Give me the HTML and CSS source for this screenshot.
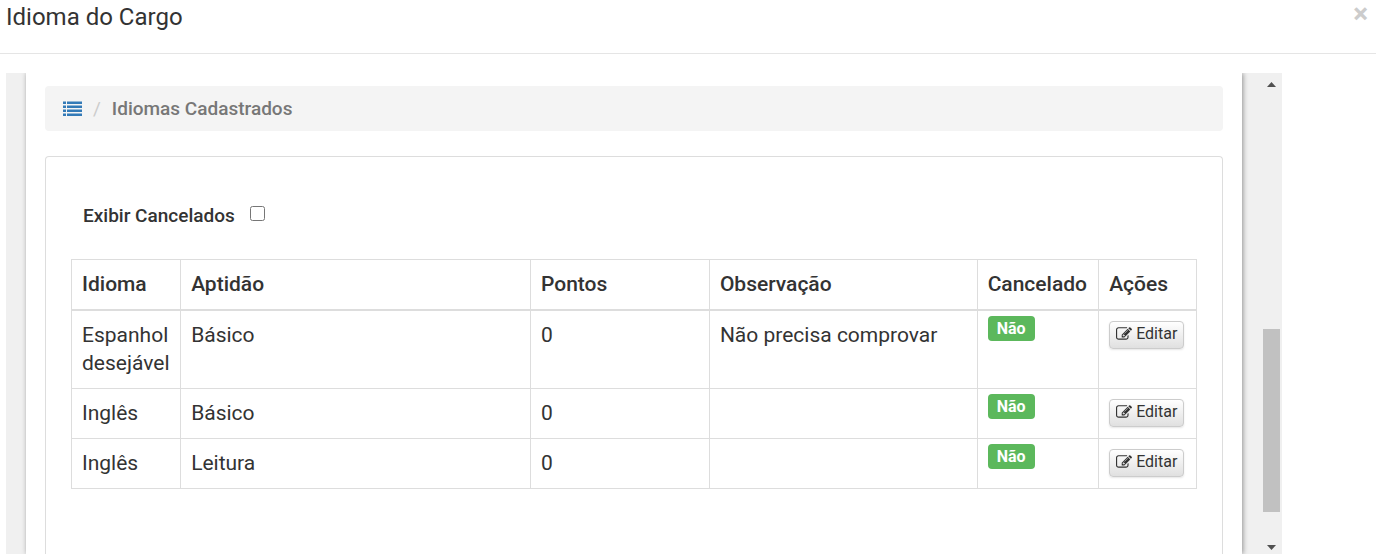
FILE: index.html
```html
<!DOCTYPE html>
<html lang="pt-BR">
<head>
<meta charset="utf-8">
<title>Idioma do Cargo</title>
<link rel="stylesheet" href="styles.css">
</head>
<body>
<svg class="sprite" aria-hidden="true">
  <symbol id="icon-edit" viewBox="0 0 1792 1792">
    <path d="M888 1184l116-116-152-152-116 116v56h96v96h56zm440-720q-16-16-33 1l-350 350q-17 17-1 33t33-1l350-350q17-17 1-33zm80 594v190q0 119-84.500 203.500t-203.500 84.500h-832q-119 0-203.500-84.500t-84.500-203.500v-832q0-119 84.500-203.500t203.500-84.500h832q63 0 117 25 15 7 18 23 3 17-9 29l-49 49q-14 14-32 8-23-6-45-6h-832q-66 0-113 47t-47 113v832q0 66 47 113t113 47h832q66 0 113-47t47-113v-126q0-13 9-22l64-64q15-15 35-7t20 29zm-96-738l288 288-672 672h-288v-288zm444 132l-92 92-288-288 92-92q28-28 68-28t68 28l152 152q28 28 28 68t-28 68z"/>
  </symbol>
</svg>
<header class="modal-header">
  <h1 class="modal-title">Idioma do Cargo</h1>
  <button class="close" type="button" aria-label="Fechar">×</button>
</header>
<div class="frame">
  <main class="sheet">
    <nav class="breadcrumb" aria-label="Navegação">
      <a class="list-link" href="#" aria-label="Lista"><svg width="19" height="15" viewBox="0 0 19 15" aria-hidden="true"><path d="M0 .5h3V3H0zM4 .5h15V3H4zM0 4.500h3V7H0zM4 4.500h15V7H4zM0 8.500h3V11H0zM4 8.500h15V11H4zM0 12.500h3V15H0zM4 12.500h15V15H4z"/></svg></a>
      <span class="divider">/</span>
      <span class="current">Idiomas Cadastrados</span>
    </nav>
    <section class="panel">
      <label class="filter">Exibir Cancelados <input class="check" type="checkbox"></label>
      <table class="grid">
        <colgroup><col class="c-lang"><col class="c-skill"><col class="c-points"><col class="c-note"><col class="c-status"><col class="c-actions"></colgroup>
        <thead>
          <tr><th>Idioma</th><th>Aptidão</th><th>Pontos</th><th>Observação</th><th>Cancelado</th><th>Ações</th></tr>
        </thead>
        <tbody>
          <tr><td>Espanhol desejável</td><td>Básico</td><td>0</td><td>Não precisa comprovar</td><td class="status"><span class="tag">Não</span></td><td class="actions"><button class="edit" type="button"><svg class="pencil" aria-hidden="true"><use href="#icon-edit"/></svg>Editar</button></td></tr>
          <tr><td>Inglês</td><td>Básico</td><td>0</td><td></td><td class="status"><span class="tag">Não</span></td><td class="actions"><button class="edit" type="button"><svg class="pencil" aria-hidden="true"><use href="#icon-edit"/></svg>Editar</button></td></tr>
          <tr><td>Inglês</td><td>Leitura</td><td>0</td><td></td><td class="status"><span class="tag">Não</span></td><td class="actions"><button class="edit" type="button"><svg class="pencil" aria-hidden="true"><use href="#icon-edit"/></svg>Editar</button></td></tr>
        </tbody>
      </table>
    </section>
  </main>
  <div class="scrollbar" aria-hidden="true">
    <svg width="9" height="5" viewBox="0 0 9 5"><path d="M0 5L4.500 0L9 5z"/></svg>
    <div class="track"><div class="thumb"></div></div>
    <svg width="9" height="5" viewBox="0 0 9 5"><path d="M0 0L4.500 5L9 0z"/></svg>
  </div>
</div>
</body>
</html>
```
FILE: styles.css
```css
* { box-sizing: border-box; }
body {
  margin: 0;
  height: 100vh;
  display: flex;
  flex-direction: column;
  overflow: hidden;
  background: #fff;
  color: #333;
  font-family: Roboto, "Liberation Sans", sans-serif;
  font-size: 21px;
  line-height: 28px;
}
.sprite { display: none; }
.modal-header {
  display: flex;
  justify-content: space-between;
  align-items: flex-start;
  padding: 0 8px 19px 6px;
  border-bottom: 1px solid #e5e5e5;
}
.modal-title {
  margin: 0;
  font-size: 24px;
  font-weight: 400;
  line-height: 34px;
}
.close {
  padding: 0;
  border: 0;
  background: none;
  color: #ccc;
  font: 700 28px/28px Roboto, "Liberation Sans", sans-serif;
}
.frame {
  flex: 1;
  min-height: 0;
  display: flex;
  margin: 19px 94px 0 6px;
  padding-left: 20px;
  overflow: hidden;
  background: #f0f0f0;
}
.sheet {
  flex: 1;
  min-width: 0;
  display: flex;
  flex-direction: column;
  gap: 25px;
  padding: 13px 19px 0;
  background: #fff;
  box-shadow: 1px 0 5px rgba(0, 0, 0, .4);
}
.breadcrumb {
  display: flex;
  align-items: center;
  padding: 9px 18px 8px;
  border-radius: 4px;
  background: #f4f4f4;
  font-size: 19px;
}
.list-link { display: flex; margin-bottom: 2px; fill: #337ab7; }
.divider { margin: 0 11px; color: #ccc; }
.current { color: #777; font-weight: 500; }
.panel {
  flex: 1;
  padding: 45px 25px 0;
  border: 1px solid #ddd;
  border-bottom: 0;
  border-radius: 4px 4px 0 0;
}
.filter {
  display: flex;
  align-items: center;
  gap: 15px;
  margin: 0 0 29px 12px;
  font-size: 19px;
  font-weight: 500;
}
.check { width: 15px; height: 15px; margin: 0 0 5px; }
.grid {
  width: 100%;
  table-layout: fixed;
  border-collapse: collapse;
}
.c-lang { width: 9.7%; }
.c-skill { width: 31.1%; }
.c-points { width: 15.9%; }
.c-note { width: 23.8%; }
.c-status { width: 10.8%; }
.c-actions { width: 8.7%; }
.grid th, .grid td {
  padding: 10px 10px 11px;
  border: 1px solid #ddd;
  text-align: left;
  vertical-align: top;
}
.grid th { border-bottom-width: 2px; font-weight: 500; }
.grid .status { padding-top: 5px; padding-bottom: 5px; }
.grid .actions { padding-top: 10px; padding-bottom: 8px; }
.tag {
  display: block;
  width: max-content;
  padding: 0 9px;
  border-radius: 4px;
  background: #5cb85c;
  color: #fff;
  font-size: 16px;
  font-weight: 700;
  line-height: 25px;
}
.edit {
  display: flex;
  align-items: center;
  gap: 4px;
  height: 28px;
  padding: 0 6px 2px;
  border: 1px solid #ccc;
  border-radius: 4px;
  background: linear-gradient(#fff, #e0e0e0);
  box-shadow: 0 1px 2px rgba(0, 0, 0, .1);
  color: #333;
  font: 16px/24px Roboto, "Liberation Sans", sans-serif;
}
.pencil { width: 16px; height: 16px; fill: #333; }
.scrollbar {
  width: 21px;
  margin-left: 19px;
  padding: 9px 0 4px;
  display: flex;
  flex-direction: column;
  align-items: center;
  gap: 8px;
}
.scrollbar svg { fill: #505050; }
.track {
  flex: 1;
  display: flex;
  flex-direction: column;
  justify-content: flex-end;
  padding-bottom: 25px;
}
.thumb { width: 17px; height: 44%; background: #c1c1c1; }
```
